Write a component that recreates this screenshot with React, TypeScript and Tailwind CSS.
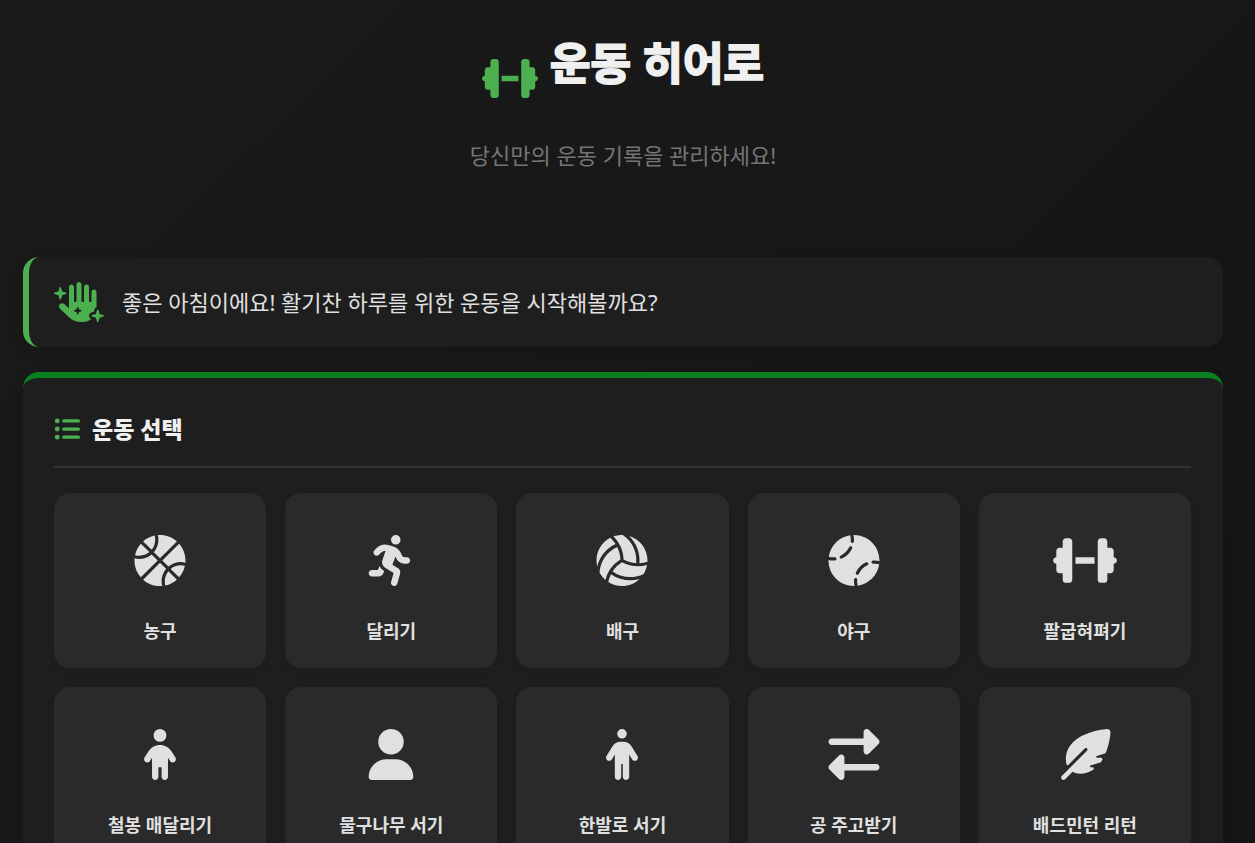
import type { IconType } from "react-icons";
import {
  FaBaseball,
  FaBasketball,
  FaChild,
  FaDumbbell,
  FaFeatherPointed,
  FaHandSparkles,
  FaListUl,
  FaPerson,
  FaPersonRunning,
  FaRightLeft,
  FaUser,
  FaVolleyball,
} from "react-icons/fa6";

type Exercise = { name: string; icon: IconType };

const exercises: Exercise[] = [
  { name: "농구", icon: FaBasketball },
  { name: "달리기", icon: FaPersonRunning },
  { name: "배구", icon: FaVolleyball },
  { name: "야구", icon: FaBaseball },
  { name: "팔굽혀펴기", icon: FaDumbbell },
  { name: "철봉 매달리기", icon: FaChild },
  { name: "물구나무 서기", icon: FaUser },
  { name: "한발로 서기", icon: FaPerson },
  { name: "공 주고받기", icon: FaRightLeft },
  { name: "배드민턴 리턴", icon: FaFeatherPointed },
];

function Header() {
  return (
    <header className="flex flex-col items-center pt-[38px]">
      <h1 className="flex h-[63px] items-start gap-3 text-[44px] leading-[50px] font-bold text-[#f0f0f0] [-webkit-text-stroke:2px_#f0f0f0]">
        <FaDumbbell className="h-[45px] w-14 self-end text-[#4caf50]" aria-hidden="true" />
        운동 히어로
      </h1>
      <p className="mt-[38px] text-[22px] leading-8 text-[#757575]">당신만의 운동 기록을 관리하세요!</p>
    </header>
  );
}

function Greeting() {
  return (
    <section className="mt-[86px] flex items-center gap-[18px] rounded-2xl border-l-6 border-[#4caf50] bg-[#1e1e1e] px-[25px] py-[25px] shadow-[0_4px_12px_rgba(0,0,0,0.1)]">
      <FaHandSparkles className="h-10 w-[50px] shrink-0 text-[#4caf50]" aria-hidden="true" />
      <p className="text-[22px] leading-8 text-[#e0e0e0]">좋은 아침이에요! 활기찬 하루를 위한 운동을 시작해볼까요?</p>
    </section>
  );
}

function ExerciseCard({ name, icon: Icon }: Exercise) {
  return (
    <button
      type="button"
      className="flex cursor-pointer flex-col items-center gap-8 rounded-2xl bg-[#2a2a2a] px-4 pt-[42px] pb-6 text-[#e0e0e0] shadow-[0_3px_8px_rgba(0,0,0,0.05)] hover:bg-[#333333]"
    >
      <Icon className="h-[51px] w-16" aria-hidden="true" />
      <span className="text-[18px] leading-[26px] font-bold">{name}</span>
    </button>
  );
}

export default function App() {
  return (
    <div className="min-h-screen bg-linear-135 from-[#1a1a1a] to-[#141414] pr-8 pb-8 pl-[23px] font-['Noto_Sans','Noto_Sans_CJK_KR',sans-serif]">
      <div className="mx-auto max-w-[1200px]">
        <Header />
        <main>
          <Greeting />
          <section className="mt-[25px] rounded-2xl border-t-6 border-[#0a8020] bg-[#1e1e1e] pt-8 pr-8 pb-8 pl-[31px] shadow-[0_4px_12px_rgba(0,0,0,0.1)]">
            <h2 className="mb-[25px] flex items-center gap-3 border-b-2 border-[#333333] pb-[18px] text-[23px] leading-[38px] font-black text-[#f0f0f0]">
              <FaListUl className="size-[26px] text-[#4caf50]" aria-hidden="true" />
              운동 선택
            </h2>
            <div className="grid grid-cols-2 gap-[19px] md:grid-cols-3 lg:grid-cols-5">
              {exercises.map((exercise) => (
                <ExerciseCard key={exercise.name} {...exercise} />
              ))}
            </div>
          </section>
        </main>
      </div>
    </div>
  );
}
